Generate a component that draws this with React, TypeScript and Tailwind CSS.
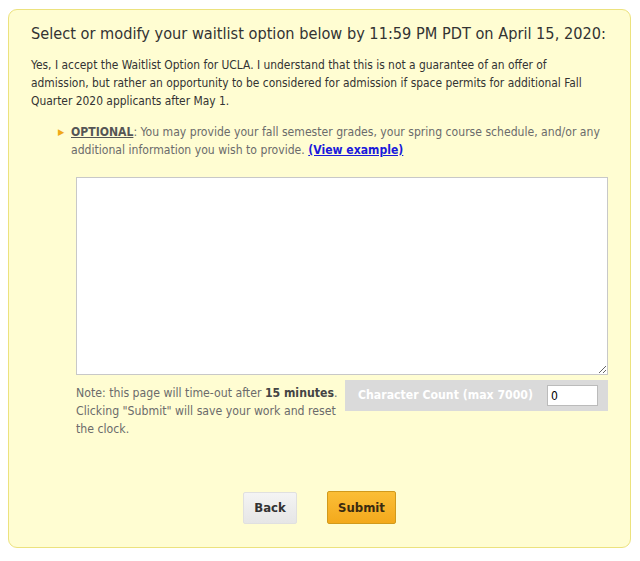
export default function App() {
  return (
    <div className="w-[640px] h-[561px] bg-white pt-[9px] pl-[8px]" style={{ fontFamily: '"DejaVu Sans Condensed", "DejaVu Sans", sans-serif' }}>
      <div className="w-[623px] h-[539px] rounded-[9px] border border-[#ece27e] bg-[#fffdd2] pl-[22px] pr-[12px] pt-[13px]">
        <h1 className="text-[16.2px] leading-[22px] text-[#333] whitespace-nowrap">
          Select or modify your waitlist option below by 11:59 PM PDT on April 15, 2020:
        </h1>
        <p className="mt-[11px] text-[11.9px] leading-[18px] text-[#333] whitespace-nowrap">
          Yes, I accept the Waitlist Option for UCLA. I understand that this is not a guarantee of an offer of
          <br />
          admission, but rather an opportunity to be considered for admission if space permits for additional Fall
          <br />
          Quarter 2020 applicants after May 1.
        </p>
        <div className="mt-[13px] flex pl-[27px]">
          <span className="w-[13px] shrink-0 text-[#f0a818] text-[9px] leading-[18px]">▶</span>
          <p className="text-[12.1px] leading-[18px] text-[#6b6b6b] whitespace-nowrap">
            <span className="font-bold underline text-[#555]">OPTIONAL</span>: You may provide your fall semester grades, your spring course schedule, and/or any
            <br />
            additional information you wish to provide.{" "}
            <a className="font-bold underline text-[#1a1adb]">(View example)</a>
          </p>
        </div>
        <div className="mt-[18px] pl-[45px]">
          <textarea className="block w-[532px] h-[198px] bg-white border border-[#c8c8c8] outline-none" />
          <div className="mt-[5px] flex">
            <p className="w-[269px] pt-[4px] text-[12.2px] leading-[18px] text-[#6b6b6b] whitespace-nowrap">
              Note: this page will time-out after <b className="text-[#444]">15 minutes</b>.
              <br />
              Clicking "Submit" will save your work and reset
              <br />
              the clock.
            </p>
            <div className="h-[31px] w-[263px] bg-[#dadada] flex items-center pl-[13px]">
              <span className="text-[12.2px] font-bold text-white whitespace-nowrap">Character Count (max 7000)</span>
              <input className="ml-[14px] w-[51px] h-[21px] bg-white border border-[#bbb] px-[3px] text-[12px] text-black" defaultValue="0" />
            </div>
          </div>
        </div>
        <div className="mt-[54px] flex justify-center gap-[30px] pr-[10px]">
          <button className="w-[54px] h-[32px] rounded-[2px] border border-[#e0e0e0] bg-gradient-to-b from-[#f4f4f4] to-[#e6e6e6] text-[13px] font-bold text-[#333]">Back</button>
          <button className="w-[69px] h-[33px] -mt-[1px] rounded-[2px] border border-[#d19a1c] bg-gradient-to-b from-[#fbbe36] to-[#f3a91b] text-[13px] font-bold text-[#3a2a10]">Submit</button>
        </div>
      </div>
    </div>
  );
}
